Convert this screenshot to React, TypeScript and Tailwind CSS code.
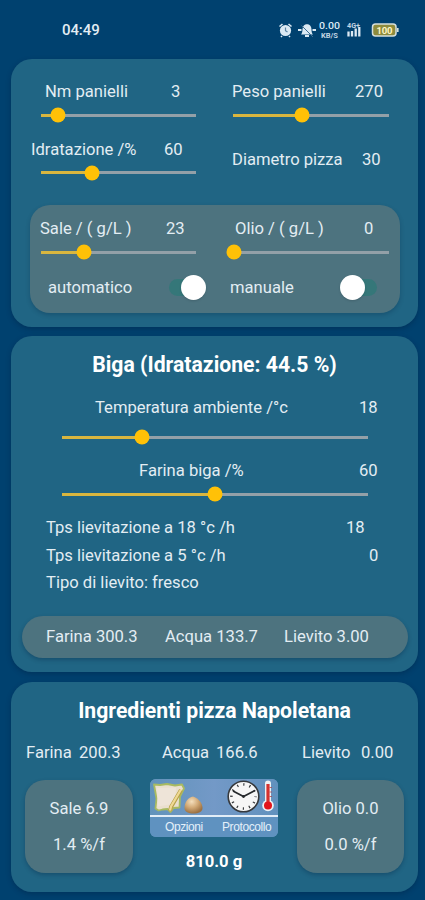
import React from 'react';

interface SliderProps {
  value: number;
  className?: string;
}

// value is the position of the thumb in percent of the track
const Slider: React.FC<SliderProps> = ({ value, className = '' }) => (
  <div className={`flex items-center ${className}`}>
    <div className="relative h-[3px] w-full bg-[#93a0a8]">
      <div className="h-full bg-[#d9b63f]" style={{ width: `${value}%` }} />
      <div
        className="absolute top-1/2 size-[15px] -translate-x-1/2 -translate-y-1/2 rounded-full bg-[#ffc107]"
        style={{ left: `${value}%` }}
      />
    </div>
  </div>
);

const Toggle: React.FC<{ on?: boolean }> = ({ on = false }) => (
  <div className={`flex h-[17px] w-[37px] items-center rounded-full bg-[#357779] ${on ? 'justify-end' : 'justify-start'}`}>
    <div className="size-[25px] shrink-0 rounded-full bg-white shadow-sm" />
  </div>
);

const Card: React.FC<{ className?: string; children: React.ReactNode }> = ({ className = '', children }) => (
  <section className={`rounded-[21px] bg-[#206584] shadow-[0_2px_5px_rgba(0,30,60,0.35)] ${className}`}>
    {children}
  </section>
);

const StatusBar: React.FC = () => (
  <header className="flex h-[59px] items-center pl-[62px] text-[#e3edf3]">
    <span className="w-[216px] pt-px text-[15px] font-medium tracking-[-0.1px]">04:49</span>
    <svg width="124" height="22" viewBox="0 0 124 22" fill="none">
      {/* alarm */}
      <circle cx="7.5" cy="11.5" r="5.6" fill="#dbe9f3" />
      <path d="M1.5 7.5 4.5 5M13.5 7.5 10.5 5M4 17l-1 1M11 17l1 1" stroke="#dbe9f3" strokeWidth="1.6" />
      <path d="M7.5 8.5v3.2l2 1.3" stroke="#5d86a5" strokeWidth="1.2" />
      {/* muted bell */}
      <path d="M23 15.5c2-2 1-5 2-7.500c.8-2 2-2.500 3.200-2.800h1.600c1.200.3 2.400.8 3.200 2.800c1 2.500 0 5.500 2 7.500z" fill="#dbe9f3" />
      <path d="M27 16h4v2h-4z" fill="#dbe9f3" />
      <path d="M23.500 6.500 35 18" stroke="#3d6d92" strokeWidth="1" />
      <path d="M20 11h3.500M34.500 11h3.500" stroke="#dbe9f3" strokeWidth="1.800" />
      {/* network speed */}
      <text x="41" y="9.500" fontSize="9" fontWeight="500" fill="#dbe9f3" textLength="21" lengthAdjust="spacingAndGlyphs">0.00</text>
      <text x="43" y="18.500" fontSize="7" fontWeight="700" fill="#c3d5e3" textLength="17" lengthAdjust="spacingAndGlyphs">KB/S</text>
      {/* signal */}
      <text x="69" y="8.500" fontSize="7" fontWeight="700" fill="#c3d5e3" textLength="13" lengthAdjust="spacingAndGlyphs">4G+</text>
      <path d="M70.500 17.500v-5M74 17.500v-5.500M77.700 17.500v-8M81.300 17.500v-9.500" stroke="#dbe9f3" strokeWidth="2.300" />
      {/* battery */}
      <rect x="94.500" y="5" width="23.500" height="12" rx="3" fill="#8d8b3d" stroke="#d5dfdc" strokeWidth="1.500" />
      <path d="M119.700 9v4" stroke="#d5dfdc" strokeWidth="1.800" />
      <text x="98.500" y="14.500" fontSize="9.500" fontWeight="700" fill="#fff6c4" textLength="16">100</text>
    </svg>
  </header>
);

const Actions: React.FC = () => (
  <div className="h-[58px] w-[128px] overflow-hidden rounded-[6px] bg-[#6595c1]">
    <svg width="128" height="36" viewBox="0 0 128 36" fill="none">
      <defs>
        <linearGradient id="sky" x1="0" y1="0" x2="1" y2="0">
          <stop offset="0" stopColor="#6293bb" />
          <stop offset="0.500" stopColor="#7399c7" />
          <stop offset="1" stopColor="#6191bd" />
        </linearGradient>
        <radialGradient id="dough" cx="0.400" cy="0.300" r="0.700">
          <stop offset="0" stopColor="#f4dfbd" />
          <stop offset="0.500" stopColor="#d3ab78" />
          <stop offset="1" stopColor="#9c7142" />
        </radialGradient>
      </defs>
      <rect width="128" height="36" fill="url(#sky)" />
      <path d="M4 5.500 10 6l7-1 8 1.500 7-1 2 4-4 8-.500 11-6 .500-3 4-3-3-5 .500-4 1-3-2 1-10z" fill="#eadfce" stroke="#a8ba61" strokeWidth="1.800" strokeLinejoin="round" />
      <path d="m7 9 19-.500-1 16-17 3z" fill="#eee4d8" />
      <path d="m31 11-10 17-1 4" stroke="#b7a14a" strokeWidth="4" />
      <path d="m31 10.500-10 17-1 4" stroke="#efd994" strokeWidth="2.200" />
      <path d="M34.500 29c0-6 4-11 8.500-11.500C48 19 52.500 24 52.500 29c0 4-4 5.500-9 5.500s-9-1.500-9-5.500z" fill="url(#dough)" />
      {/* clock */}
      <circle cx="93.500" cy="17.500" r="15.300" fill="#f6f6f6" stroke="#36393d" strokeWidth="1.600" />
      <circle cx="93.500" cy="17.500" r="12" stroke="#35383b" strokeWidth="2.600" strokeDasharray="1.200 5.083" strokeDashoffset="0.600" />
      <path d="m83 12 10.500 5.500L105 11.500" stroke="#26292c" strokeWidth="1.700" />
      <circle cx="93.500" cy="17.500" r="1.400" fill="#26292c" />
      {/* thermometer */}
      <path d="M118 4.500v20" stroke="#eef1f4" strokeWidth="6" strokeLinecap="round" />
      <circle cx="118" cy="26.500" r="5.800" fill="#eef1f4" />
      <path d="M118 5v21" stroke="#d5322f" strokeWidth="3.200" />
      <circle cx="118" cy="26.500" r="4" fill="#e3151b" />
      <path d="M119.500 8.500h2.500M119.500 13h2.500M119.500 17.500h2.500" stroke="#a84a52" strokeWidth="0.800" />
    </svg>
    <div className="h-[1.500px] bg-[#e2edf7]" />
    <div className="flex h-[20px] items-center bg-[#5f92c0] pl-[15px] font-[Liberation_Sans,sans-serif] text-[12px] text-[#e4f0fa]">
      <span className="w-[57px] tracking-[-0.4px]">Opzioni</span>
      <span className="tracking-[-0.4px]">Protocollo</span>
    </div>
  </div>
);

const App: React.FC = () => {
  return (
    <div className="h-[900px] w-[425px] overflow-hidden bg-[#00416f] font-[Roboto,sans-serif] text-[16.6px] whitespace-nowrap text-[#e3edf3]">
      <StatusBar />
      <main className="flex flex-col pr-[7px] pl-[11px]">
        <Card className="h-[268px] pt-[20px]">
          <div className="flex">
            <div className="w-[204px]">
              <div className="flex h-6 items-center pt-[2px] pl-[34px]">
                <span className="w-[126px]">Nm panielli</span>
                <span>3</span>
              </div>
              <Slider value={11} className="ml-[30px] h-6 w-[155px]" />
              <div className="mt-[10px] flex h-6 items-center pt-[2px] pl-[20px]">
                <span className="w-[133px]">Idratazione /%</span>
                <span>60</span>
              </div>
              <Slider value={33} className="ml-[30px] h-[23px] w-[155px]" />
            </div>
            <div>
              <div className="flex h-6 items-center pt-[2px] pl-[17px]">
                <span className="w-[123px]">Peso panielli</span>
                <span>270</span>
              </div>
              <Slider value={44} className="ml-[18px] h-6 w-[156px]" />
              <div className="mt-[21px] flex h-6 items-center pl-[17px]">
                <span className="w-[130px]">Diametro pizza</span>
                <span>30</span>
              </div>
            </div>
          </div>
          <div className="mt-[21px] ml-[19px] flex h-[108px] w-[370px] rounded-[20px] bg-[#4d737f] pt-3 shadow-[0_2px_4px_rgba(0,30,60,0.25)]">
            <div className="w-[185px]">
              <div className="flex h-6 items-center pl-[10px]">
                <span className="w-[126px]">Sale / ( g/L )</span>
                <span>23</span>
              </div>
              <Slider value={28} className="ml-[11px] h-[22px] w-[155px]" />
              <div className="mt-[12px] flex h-6 items-center pl-[18px]">
                <span className="w-[121px] pt-[3px]">automatico</span>
                <Toggle on />
              </div>
            </div>
            <div>
              <div className="flex h-6 items-center pl-[20px]">
                <span className="w-[129px]">Olio / ( g/L )</span>
                <span>0</span>
              </div>
              <Slider value={0} className="ml-[19px] h-[22px] w-[155px]" />
              <div className="mt-[12px] flex h-6 items-center pl-[15px]">
                <span className="w-[110px] pt-[3px]">manuale</span>
                <Toggle />
              </div>
            </div>
          </div>
        </Card>

        <Card className="mt-[9px] h-[336px] pt-[15px]">
          <h2 className="h-7 text-center text-[21.2px] leading-7 font-bold text-white">Biga (Idratazione: 44.5 %)</h2>
          <div className="mt-[17px] flex h-6 items-center pl-[84px]">
            <span className="w-[264px]">Temperatura ambiente /°c</span>
            <span>18</span>
          </div>
          <Slider value={26} className="mt-[5px] ml-[51px] h-6 w-[306px]" />
          <div className="mt-[10px] flex h-6 items-center pl-[128px]">
            <span className="w-[220px]">Farina biga /%</span>
            <span>60</span>
          </div>
          <Slider value={50} className="ml-[51px] h-[22px] w-[306px]" />
          <div className="mt-[10px] pl-[35px]">
            <div className="flex h-[27px] items-center">
              <span className="w-[300px]">Tps lievitazione a 18 °c /h</span>
              <span>18</span>
            </div>
            <div className="flex h-[28px] items-center">
              <span className="w-[323px]">Tps lievitazione a 5 °c /h</span>
              <span>0</span>
            </div>
            <div className="flex h-[27px] items-center">Tipo di lievito: fresco</div>
          </div>
          <div className="mt-[19px] ml-[11px] flex h-[42px] w-[386px] items-center rounded-full bg-[#4d737f] pl-[24px] shadow-[0_2px_4px_rgba(0,30,60,0.3)]">
            <span className="w-[119px]">Farina 300.3</span>
            <span className="w-[119px]">Acqua 133.7</span>
            <span>Lievito 3.00</span>
          </div>
        </Card>

        <Card className="mt-[10px] h-[210px] pt-[15px]">
          <h2 className="h-7 text-center text-[21.2px] leading-7 font-bold text-white">Ingredienti pizza Napoletana</h2>
          <div className="mt-[16px] flex h-6 items-center pl-[15px]">
            <span className="w-[53px]">Farina</span>
            <span className="w-[83px]">200.3</span>
            <span className="w-[54px]">Acqua</span>
            <span className="w-[86px]">166.6</span>
            <span className="w-[59px]">Lievito</span>
            <span>0.00</span>
          </div>
          <div className="mt-[14px] flex">
            <div className="mt-[1px] ml-[14px] flex h-[93px] w-[108px] flex-col items-center rounded-[20px] bg-[#4d737f] pt-[17px] shadow-[0_2px_4px_rgba(0,30,60,0.3)]">
              <span className="h-[36px] leading-6">Sale 6.9</span>
              <span className="leading-6">1.4 %/f</span>
            </div>
            <div className="ml-[17px] flex flex-col items-center">
              <Actions />
              <span className="mt-[13px] leading-6 font-bold text-white">810.0 g</span>
            </div>
            <div className="mt-[1px] ml-[19px] flex h-[93px] w-[107px] flex-col items-center rounded-[20px] bg-[#4d737f] pt-[17px] shadow-[0_2px_4px_rgba(0,30,60,0.3)]">
              <span className="h-[36px] leading-6">Olio 0.0</span>
              <span className="leading-6">0.0 %/f</span>
            </div>
          </div>
        </Card>
      </main>
    </div>
  );
};

export default App;
